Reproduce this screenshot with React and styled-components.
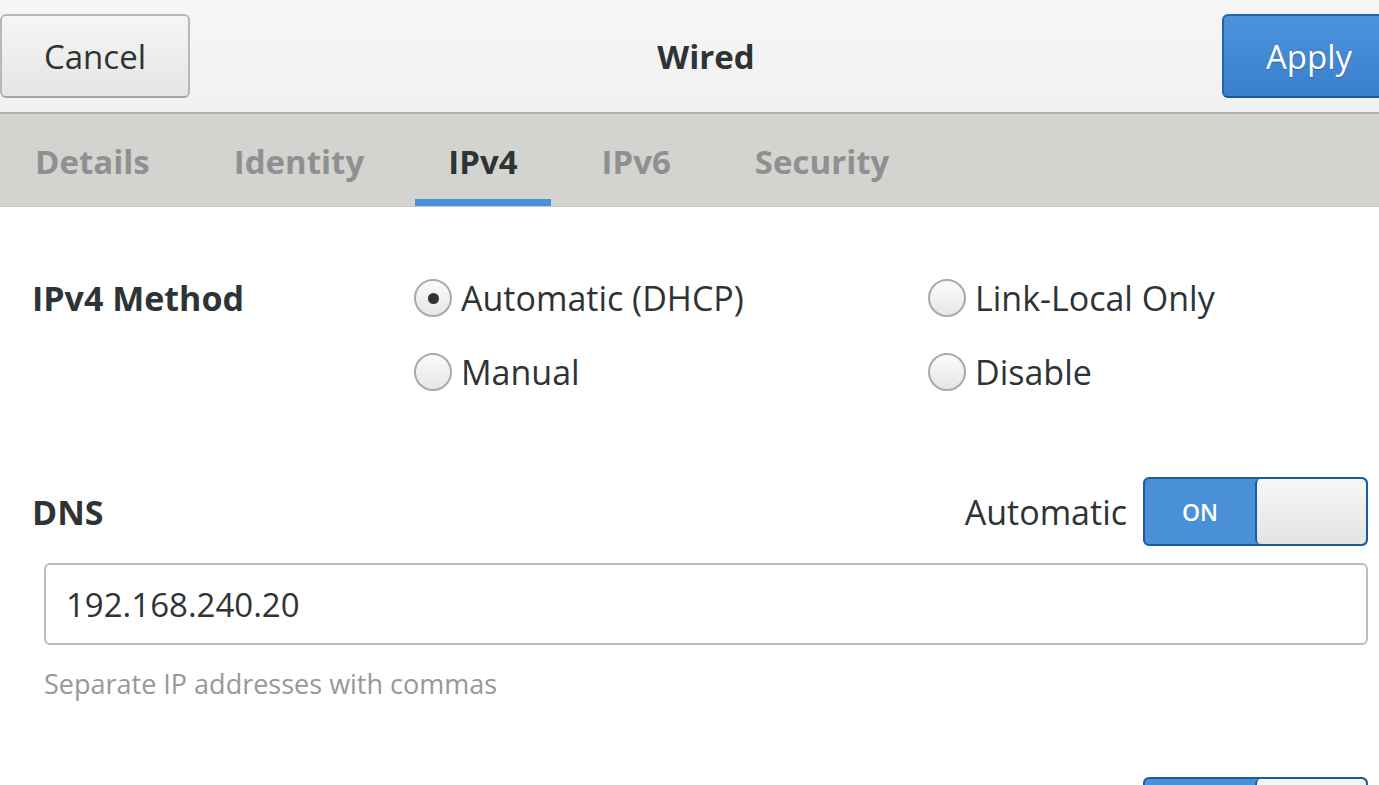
import React from "react";
import styled, { createGlobalStyle } from "styled-components";

const Global = createGlobalStyle`
  html, body { margin: 0; padding: 0; background: #ffffff; }
  body { font-family: "Open Sans", "Noto Sans", sans-serif; }
  * { box-sizing: border-box; }
`;

const Window = styled.div`
  width: 1379px;
  height: 785px;
  overflow: hidden;
  background: #ffffff;
  display: flex;
  flex-direction: column;
  font-family: "Open Sans", "Noto Sans", sans-serif;
  color: #2e3436;
`;

const HeaderBar = styled.header`
  height: 114px;
  flex: none;
  display: flex;
  align-items: center;
  overflow: hidden;
  background: linear-gradient(#f6f6f6, #f1f1f1);
  border-bottom: 2px solid #b1b1ae;
`;

const Button = styled.button`
  flex: none;
  height: 84px;
  width: ${(p) => p.$width}px;
  margin-right: ${(p) => p.$overhang || 0}px;
  border-radius: 6px;
  font-family: inherit;
  font-size: 33px;
  font-weight: 400;
  padding: 0;
  ${(p) =>
    p.$suggested
      ? `
    color: #ffffff;
    background: linear-gradient(#4d92dc, #3a7fcc);
    border: 2px solid #2464ad;
    border-bottom-color: #1d5796;
    text-shadow: 0 1px 1px rgba(0,0,0,0.25);
  `
      : `
    color: #2e3436;
    background: linear-gradient(#f5f5f4, #e5e5e3);
    border: 2px solid #b8b8b5;
    border-bottom-color: #a4a4a1;
  `}
`;

const Title = styled.h1`
  flex: 1;
  margin: 0;
  text-align: center;
  font-size: 33px;
  font-weight: 700;
  color: #2e3436;
`;

const TabBar = styled.nav`
  height: 93px;
  flex: none;
  display: flex;
  align-items: stretch;
  gap: 18px;
  padding-left: 2px;
  background: #d3d3d0;
  border-bottom: 1px solid #c6c6c3;
`;

const Tab = styled.div`
  display: flex;
  align-items: center;
  padding: 2px 33px 0;
  font-size: 33px;
  font-weight: 700;
  color: ${(p) => (p.$active ? "#2e3436" : "#8e9091")};
  box-shadow: ${(p) => (p.$active ? "inset 0 -7px 0 #4a90d9" : "none")};
`;

const Content = styled.main`
  flex: 1;
  display: flex;
  flex-direction: column;
  padding: 68px 11px 0 32px;
`;

const MethodGrid = styled.div`
  display: grid;
  grid-template-columns: 382px 514px 1fr;
  grid-auto-rows: 46px;
  row-gap: 28px;
  align-items: center;
`;

const SectionLabel = styled.div`
  font-size: 34px;
  font-weight: 700;
  color: #2e3436;
`;

const RadioRow = styled.label`
  display: flex;
  align-items: center;
  gap: 9px;
  font-size: 34px;
  color: #2e3436;
`;

const RadioCircle = styled.span`
  flex: none;
  width: 38px;
  height: 38px;
  border-radius: 50%;
  border: 2px solid #a9a9a6;
  background: linear-gradient(#fbfbfb, #e6e6e4);
  display: flex;
  align-items: center;
  justify-content: center;
  &::after {
    content: "";
    width: 11px;
    height: 11px;
    border-radius: 50%;
    background: #2e3436;
    display: ${(p) => (p.$checked ? "block" : "none")};
  }
`;

const SwitchRow = styled.div`
  display: flex;
  align-items: center;
  height: 69px;
  margin-top: ${(p) => p.$top}px;
`;

const Spacer = styled.div`
  flex: 1;
`;

const SwitchLabel = styled.span`
  font-size: 34px;
  color: #2e3436;
  margin-right: 16px;
`;

const Switch = styled.div`
  flex: none;
  width: 225px;
  height: 69px;
  display: flex;
  border: 2px solid #1f5a99;
  border-radius: 6px;
  overflow: hidden;
  background: #4a90d9;
`;

const SwitchOn = styled.div`
  width: 110px;
  display: flex;
  align-items: center;
  justify-content: center;
  color: #ffffff;
  font-size: 23px;
  font-weight: 600;
`;

const SwitchKnob = styled.div`
  flex: 1;
  border-left: 2px solid #1f5a99;
  border-radius: 5px;
  background: linear-gradient(#f6f6f5, #e4e4e2);
`;

const Indented = styled.div`
  margin-left: 12px;
  display: flex;
  flex-direction: column;
`;

const Entry = styled.div`
  margin-top: 17px;
  height: 82px;
  border: 2px solid #bcbcb9;
  border-radius: 6px;
  background: #ffffff;
  display: flex;
  align-items: center;
  padding-left: 20px;
  font-size: 33px;
  color: #2e3436;
`;

const Hint = styled.div`
  margin-top: 21px;
  font-size: 27px;
  line-height: 36px;
  color: #96999a;
`;

const radios = [
  { label: "Automatic (DHCP)", checked: true },
  { label: "Link-Local Only" },
  { label: "Manual" },
  { label: "Disable" },
];

function Toggle({ showText = true }) {
  return (
    <Switch>
      <SwitchOn>{showText ? "ON" : null}</SwitchOn>
      <SwitchKnob />
    </Switch>
  );
}

export default function App() {
  return (
    <Window>
      <Global />
      <HeaderBar>
        <Button $width={190}>Cancel</Button>
        <Title>Wired</Title>
        <Button $width={174} $overhang={-17} $suggested>
          Apply
        </Button>
      </HeaderBar>
      <TabBar>
        <Tab>Details</Tab>
        <Tab>Identity</Tab>
        <Tab $active>IPv4</Tab>
        <Tab>IPv6</Tab>
        <Tab>Security</Tab>
      </TabBar>
      <Content>
        <MethodGrid>
          <SectionLabel>IPv4 Method</SectionLabel>
          <RadioRow>
            <RadioCircle $checked={radios[0].checked} />
            {radios[0].label}
          </RadioRow>
          <RadioRow>
            <RadioCircle />
            {radios[1].label}
          </RadioRow>
          <div />
          <RadioRow>
            <RadioCircle />
            {radios[2].label}
          </RadioRow>
          <RadioRow>
            <RadioCircle />
            {radios[3].label}
          </RadioRow>
        </MethodGrid>
        <SwitchRow $top={82}>
          <SectionLabel>DNS</SectionLabel>
          <Spacer />
          <SwitchLabel>Automatic</SwitchLabel>
          <Toggle />
        </SwitchRow>
        <Indented>
          <Entry>192.168.240.20</Entry>
          <Hint>Separate IP addresses with commas</Hint>
        </Indented>
        <SwitchRow $top={75}>
          <Spacer />
          <Toggle showText={false} />
        </SwitchRow>
      </Content>
    </Window>
  );
}
